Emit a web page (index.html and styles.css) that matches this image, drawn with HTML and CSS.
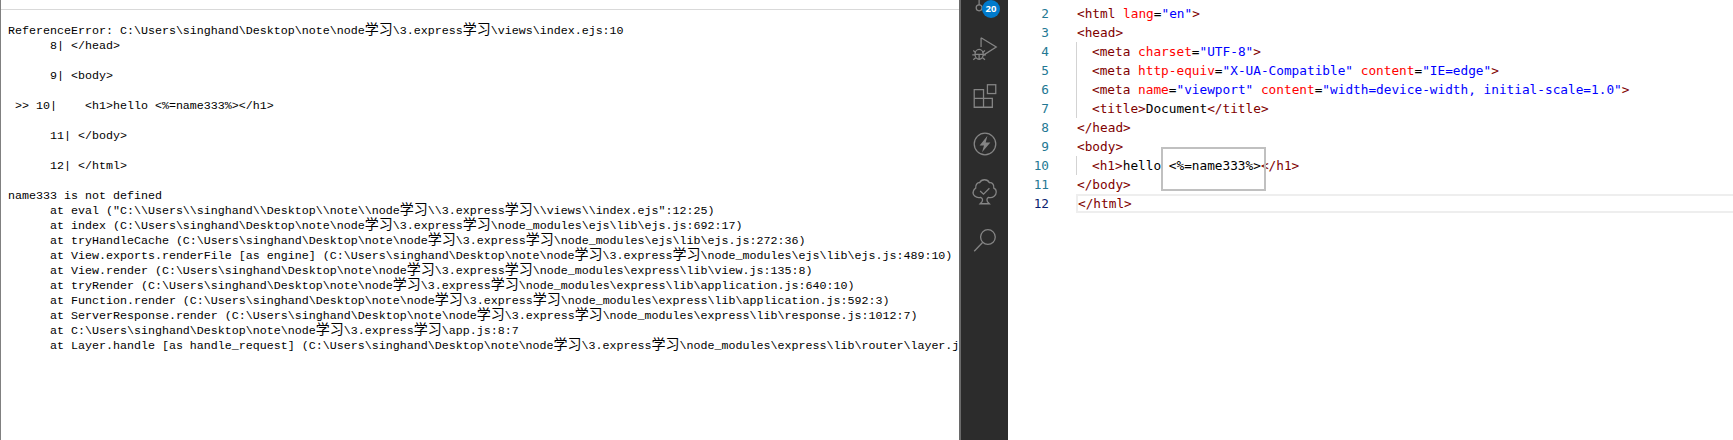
FILE: index.html
```html
<!DOCTYPE html>
<html lang="en">
<head>
<meta charset="UTF-8">
<title>Error and editor</title>
<link rel="stylesheet" href="styles.css">
</head>
<body>
<div class="app">
  <main class="browser">
    <div class="trace">
      <div class="row">ReferenceError: C:\Users\singhand\Desktop\note\node<span class="cn">学习</span>\3.express<span class="cn">学习</span>\views\index.ejs:10</div>
      <div class="row">      8| &lt;/head&gt;</div>
      <div class="row"></div>
      <div class="row">      9| &lt;body&gt;</div>
      <div class="row"></div>
      <div class="row"> &gt;&gt; 10|    &lt;h1&gt;hello &lt;%=name333%&gt;&lt;/h1&gt;</div>
      <div class="row"></div>
      <div class="row">      11| &lt;/body&gt;</div>
      <div class="row"></div>
      <div class="row">      12| &lt;/html&gt;</div>
      <div class="row"></div>
      <div class="row">name333 is not defined</div>
      <div class="row">      at eval ("C:\\Users\\singhand\\Desktop\\note\\node<span class="cn">学习</span>\\3.express<span class="cn">学习</span>\\views\\index.ejs":12:25)</div>
      <div class="row">      at index (C:\Users\singhand\Desktop\note\node<span class="cn">学习</span>\3.express<span class="cn">学习</span>\node_modules\ejs\lib\ejs.js:692:17)</div>
      <div class="row">      at tryHandleCache (C:\Users\singhand\Desktop\note\node<span class="cn">学习</span>\3.express<span class="cn">学习</span>\node_modules\ejs\lib\ejs.js:272:36)</div>
      <div class="row">      at View.exports.renderFile [as engine] (C:\Users\singhand\Desktop\note\node<span class="cn">学习</span>\3.express<span class="cn">学习</span>\node_modules\ejs\lib\ejs.js:489:10)</div>
      <div class="row">      at View.render (C:\Users\singhand\Desktop\note\node<span class="cn">学习</span>\3.express<span class="cn">学习</span>\node_modules\express\lib\view.js:135:8)</div>
      <div class="row">      at tryRender (C:\Users\singhand\Desktop\note\node<span class="cn">学习</span>\3.express<span class="cn">学习</span>\node_modules\express\lib\application.js:640:10)</div>
      <div class="row">      at Function.render (C:\Users\singhand\Desktop\note\node<span class="cn">学习</span>\3.express<span class="cn">学习</span>\node_modules\express\lib\application.js:592:3)</div>
      <div class="row">      at ServerResponse.render (C:\Users\singhand\Desktop\note\node<span class="cn">学习</span>\3.express<span class="cn">学习</span>\node_modules\express\lib\response.js:1012:7)</div>
      <div class="row">      at C:\Users\singhand\Desktop\note\node<span class="cn">学习</span>\3.express<span class="cn">学习</span>\app.js:8:7</div>
      <div class="row">      at Layer.handle [as handle_request] (C:\Users\singhand\Desktop\note\node<span class="cn">学习</span>\3.express<span class="cn">学习</span>\node_modules\express\lib\router\layer.js:95:5)</div>
    </div>
  </main>

  <nav class="activity">
    <div class="item">
      <svg class="icon" viewBox="0 0 48 48"><circle cx="18.5" cy="32" r="3"/><path d="M18.5 29V16"/></svg>
      <span class="badge">20</span>
    </div>
    <div class="item">
      <svg class="icon" viewBox="0 0 48 48"><path d="M20.5 13.5 36 23 22.5 31.5M20.5 13.5V23"/><ellipse cx="18.5" cy="30.5" rx="4.2" ry="5"/><path d="M12.5 26.5l2.5 2M24.5 26.5l-2.5 2M11.5 31h3M22.5 31h3M12.5 36l2.5-2M24.5 36l-2.5-2M14.5 30.5h8M18.5 30.5v5"/></svg>
    </div>
    <div class="item">
      <svg class="icon" viewBox="0 0 48 48"><path d="M13.5 17.5h9.5v9h9v9h-18.500zM13.5 26.5h9.5v9"/><rect x="27" y="12.5" width="8.5" height="9"/></svg>
    </div>
    <div class="item">
      <svg class="icon" viewBox="0 0 48 48"><circle cx="24.5" cy="24" r="11"/><path class="fill" d="M27 15.5 19 25.5h4.5L21.5 32.5 30 22.5h-4.8z"/></svg>
    </div>
    <div class="item">
      <svg class="icon" viewBox="0 0 48 48"><path d="M20 29.5C15 30.5 11.5 27 12.5 23.5 13 21.5 14 20.5 15 20 14.5 16 17.5 14 19 14.5 20 12.5 22 11.5 24 11.5 26 11.5 28 12.5 29 14.5 31.5 14 34 16 33.5 20 35 20.5 36 22 36 24 36 27 33 30.5 28 29.5 27 30 26.5 30.5 26.5 32L27 34 29 36H19.500L21.500 34 22 32C22 30.500 21 30 20 29.500Z"/><path d="M19.5 23l3.500 3.200 6-6"/></svg>
    </div>
    <div class="item">
      <svg class="icon" viewBox="0 0 48 48"><circle cx="27.5" cy="21" r="7.5"/><path d="M22 26.5 13.5 35.5"/></svg>
    </div>
  </nav>

  <section class="editor">
    <div class="line"><span class="num">2</span><code class="code"><i class="t">&lt;html</i> <i class="a">lang</i>=<i class="v">"en"</i><i class="t">&gt;</i></code></div>
    <div class="line"><span class="num">3</span><code class="code"><i class="t">&lt;head&gt;</i></code></div>
    <div class="line"><span class="num">4</span><code class="code guide"><i class="t">&lt;meta</i> <i class="a">charset</i>=<i class="v">"UTF-8"</i><i class="t">&gt;</i></code></div>
    <div class="line"><span class="num">5</span><code class="code guide"><i class="t">&lt;meta</i> <i class="a">http-equiv</i>=<i class="v">"X-UA-Compatible"</i> <i class="a">content</i>=<i class="v">"IE=edge"</i><i class="t">&gt;</i></code></div>
    <div class="line"><span class="num">6</span><code class="code guide"><i class="t">&lt;meta</i> <i class="a">name</i>=<i class="v">"viewport"</i> <i class="a">content</i>=<i class="v">"width=device-width, initial-scale=1.0"</i><i class="t">&gt;</i></code></div>
    <div class="line"><span class="num">7</span><code class="code guide"><i class="t">&lt;title&gt;</i>Document<i class="t">&lt;/title&gt;</i></code></div>
    <div class="line"><span class="num">8</span><code class="code"><i class="t">&lt;/head&gt;</i></code></div>
    <div class="line"><span class="num">9</span><code class="code"><i class="t">&lt;body&gt;</i></code></div>
    <div class="line"><span class="num">10</span><code class="code guide"><i class="t">&lt;h1&gt;</i>hello &lt;%=name333%&gt;<i class="t">&lt;/h1&gt;</i></code></div>
    <div class="line"><span class="num">11</span><code class="code"><i class="t">&lt;/body&gt;</i></code></div>
    <div class="line current"><span class="num">12</span><code class="code"><i class="t">&lt;/html&gt;</i></code></div>
    <div class="mark"></div>
  </section>
</div>
</body>
</html>
```

FILE: styles.css
```css
html, body {
  margin: 0;
  height: 100%;
  background: #fff;
  overflow: hidden;
}

.app {
  display: flex;
  height: 440px;
}

.browser {
  flex: 0 0 959px;
  box-sizing: border-box;
  padding-top: 9px;
  border-left: 1px solid #808080;
  overflow: hidden;
}

.trace {
  border-top: 1px solid #d9d9d9;
  padding: 14px 0 0 7px;
  font-family: "Liberation Mono", monospace;
  font-size: 11.665px;
  line-height: 15px;
  color: #000;
}

.row {
  height: 15px;
  white-space: pre;
}

.cn {
  font-family: "Noto Sans CJK SC", sans-serif;
  font-size: 14px;
  line-height: 0;
}

.activity {
  flex: 0 0 49px;
  box-sizing: border-box;
  border-left: 2px solid #6a6a6a;
  background: #2c2c2c;
  overflow: hidden;
}

.item {
  position: relative;
  height: 48px;
}

.item:first-child {
  margin-top: -24px;
}

.icon {
  display: block;
  width: 47px;
  height: 48px;
  fill: none;
  stroke: #858585;
  stroke-width: 1.3;
}

.icon .fill {
  fill: #858585;
  stroke: none;
}

.badge {
  position: absolute;
  left: 21px;
  top: 24px;
  width: 18px;
  height: 18px;
  border-radius: 50%;
  background: #007acc;
  color: #fff;
  font-family: "Open Sans", sans-serif;
  font-size: 9.5px;
  font-weight: 700;
  line-height: 18px;
  text-align: center;
}

.editor {
  position: relative;
  flex: 1;
  padding-top: 4px;
  font-family: "DejaVu Sans Mono", monospace;
  font-size: 12.75px;
  line-height: 19px;
}

.line {
  display: flex;
  height: 19px;
}

.num {
  flex: 0 0 41px;
  text-align: right;
  color: #237893;
}

.code {
  flex: 1;
  margin-left: 27px;
  padding-left: 1px;
  font: inherit;
  color: #000;
  white-space: pre;
}

.code i {
  font-style: normal;
}

.guide {
  padding-left: 16px;
  box-shadow: inset 1px 0 #d3d3d3;
}

.t { color: #800000; }
.a { color: #ff0000; }
.v { color: #0000ff; }

.current .num {
  color: #0b216f;
}

.current .code {
  box-sizing: border-box;
  height: 19px;
  padding-left: 0;
  line-height: 15px;
  border: 2px solid #eeeeee;
  border-right: 0;
}

.mark {
  position: absolute;
  left: 153px;
  top: 147px;
  width: 101px;
  height: 40px;
  border: 2px solid #c0c0c0;
}
```
